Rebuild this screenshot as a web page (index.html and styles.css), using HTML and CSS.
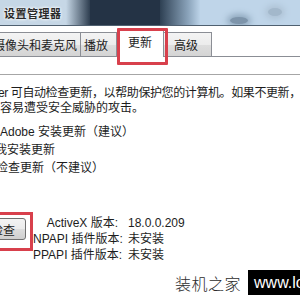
FILE: index.html
```html
<!DOCTYPE html>
<html lang="zh-CN">
<head>
<meta charset="utf-8">
<title>设置管理器</title>
<link rel="stylesheet" href="styles.css">
</head>
<body>
<div class="window">
  <div class="titlebar">
    <div class="tb-left"><span class="title">设置管理器</span></div>
    <div class="tb-fade-in"></div>
    <div class="tb-dark"></div>
    <div class="tb-fade-out"></div>
    <div class="tb-right">
      <span class="smudge s1"></span>
      <span class="smudge s2"></span>
    </div>
  </div>
  <div class="tabs">
    <div class="tab tab-cam">摄像头和麦克风</div>
    <div class="tab tab-play">播放</div>
    <div class="tab tab-sel">更新</div>
    <div class="tab tab-adv">高级</div>
  </div>
  <div class="mark mark-tab"></div>
  <div class="panel">
    <div class="sep"></div>
    <div class="intro">
      <p class="first">er 可自动检查更新，以帮助保护您的计算机。如果不更新，</p>
      <p>容易遭受安全威胁的攻击。</p>
    </div>
    <div class="options">
      <p>Adobe 安装更新（建议）</p>
      <p class="cut1">我安装更新</p>
      <p class="cut2">检查更新（不建议）</p>
    </div>
    <div class="checkrow">
      <div class="mark-btn"><button class="btn">检查</button></div>
      <div class="versions">
        <span class="lbl">ActiveX 版本:</span><span class="val">18.0.0.209</span>
        <span class="lbl">NPAPI 插件版本:</span><span class="val">未安装</span>
        <span class="lbl">PPAPI 插件版本:</span><span class="val">未安装</span>
      </div>
    </div>
  </div>
  <div class="watermark">
    <span class="wm-cn">装机之家</span>
    <span class="wm-url">www.lotpc.com</span>
  </div>
</div>
</body>
</html>
```
FILE: styles.css
```css
html, body {
  margin: 0;
  padding: 0;
  width: 300px;
  height: 300px;
  overflow: hidden;
  background: #ffffff;
}
.window {
  position: relative;
  width: 300px;
  height: 300px;
  overflow: hidden;
  font-family: "Liberation Sans", "Noto Sans CJK SC", sans-serif;
  font-size: 12px;
  color: #1d1d1d;
}
p { margin: 0; white-space: nowrap; }

.titlebar {
  height: 25px;
  border-bottom: 1px solid #4f6070;
  display: flex;
  overflow: hidden;
  background: #c4d8ea;
}
.tb-left {
  flex: 0 0 66px;
  display: flex;
  align-items: center;
  background: #c6d7e6;
}
.tb-fade-in {
  flex: 0 0 24px;
  background: linear-gradient(90deg, #c6d7e6, #2e3e50);
}
.tb-dark {
  flex: 0 0 70px;
  background: #243345;
}
.tb-fade-out {
  flex: 0 0 40px;
  background: linear-gradient(90deg, #2e4053, #8aa3ba 70%, #bcd3e8);
}
.tb-right {
  flex: 1 1 auto;
  display: flex;
  align-items: flex-end;
  gap: 20px;
  padding-left: 30px;
  background: #bfd5e9;
}
.smudge {
  display: block;
  width: 18px;
  height: 7px;
  border-radius: 50%;
  background: #7d94aa;
  box-shadow: 0 0 6px 3px #8ea6bc;
  margin-bottom: 1px;
}
.s2 {
  width: 14px;
  height: 8px;
  margin-bottom: 9px;
  background: #a3b8cb;
  box-shadow: 0 0 6px 3px #aec2d4;
}
.title {
  margin-left: 4px;
  font-family: "Noto Sans CJK SC", sans-serif;
  font-size: 11px;
  font-weight: 700;
  color: #2a2a2a;
  text-shadow: 0 0 3px #ffffff, 0 0 3px #ffffff;
  letter-spacing: 0.5px;
  white-space: nowrap;
}

.tabs {
  display: flex;
  align-items: flex-end;
  height: 30px;
  margin-left: -12px;
  border-bottom: 1px solid #8b8e95;
}
.tab {
  height: 23px;
  line-height: 24px;
  border: 1px solid #8b8e95;
  border-bottom: none;
  background: linear-gradient(#f4f4f4 0%, #ececec 50%, #dedede 51%, #d4d4d4 100%);
  font-family: "Noto Sans CJK SC", sans-serif;
  font-size: 12px;
  white-space: nowrap;
}
.tab-cam { padding: 0 3px 0 4px; }
.tab-play { padding: 0 8px 0 3px; border-left: none; }
.tab-sel {
  position: relative;
  height: 27px;
  line-height: 24px;
  padding: 0 11px;
  margin-bottom: -1px;
  background: #ffffff;
  border-left: none;
}
.tab-adv { padding: 0 13px 0 10px; border-left: none; }

.mark {
  position: absolute;
  border: 3px solid #d8404c;
  border-radius: 1px;
}
.mark-tab {
  left: 117px;
  top: 28px;
  width: 45px;
  height: 31px;
}

.sep {
  height: 1px;
  margin-top: 17px;
  background: #a6a6a6;
}
.intro {
  margin-top: 11px;
  line-height: 15px;
}
.first { margin-left: -2px; letter-spacing: -0.4px; }
.options {
  margin-top: 7px;
  line-height: 18px;
}
.cut1 { margin-left: -5px; }
.cut2 { margin-left: -4px; }

.checkrow {
  display: flex;
  align-items: flex-start;
  margin-top: 35px;
}
.mark-btn {
  margin-left: -24px;
  border: 3px solid #d8404c;
  padding: 3px 4px 8px 3px;
}
.btn {
  display: block;
  width: 44px;
  height: 22px;
  padding: 0 10px 0 0;
  border: 1px solid #707070;
  border-radius: 3px;
  background: linear-gradient(#f3f3f3 0%, #ebebeb 50%, #dddddd 51%, #cfcfcf 100%);
  font-family: "Noto Sans CJK SC", sans-serif;
  font-size: 12px;
  color: #1d1d1d;
  text-align: right;
}
.versions {
  display: grid;
  grid-template-columns: 85px auto;
  column-gap: 10px;
  margin-top: 3px;
  line-height: 16px;
}
.lbl { text-align: right; white-space: nowrap; }
.val { white-space: nowrap; }

.watermark {
  position: absolute;
  left: 175px;
  top: 270px;
  display: flex;
  align-items: center;
  gap: 7px;
  height: 25px;
  white-space: nowrap;
}
.wm-cn {
  font-family: "Noto Sans CJK SC", sans-serif;
  font-weight: 300;
  font-size: 16px;
  color: #2c2c2c;
  letter-spacing: 0.5px;
}
.wm-url {
  background: #000000;
  color: #ffffff;
  height: 25px;
  line-height: 25px;
  padding: 0 6px;
  font-size: 16px;
  font-family: "Liberation Sans", sans-serif;
}
```
